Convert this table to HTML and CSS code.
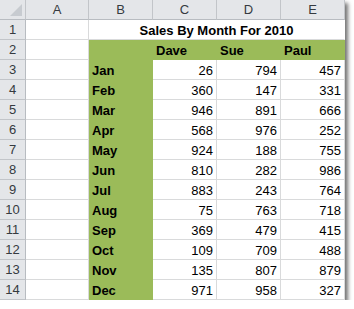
FILE: index.html
```html
<!DOCTYPE html>
<html lang="en">
<head>
    <meta charset="UTF-8">
    <meta name="viewport" content="width=device-width, initial-scale=1.0">
    <title>Sales By Month For 2010</title>
    <link rel="stylesheet" href="styles.css">
</head>
<body>
    <div class="sheet">
        <table class="grid">
            <colgroup>
                <col class="col-head">
                <col class="col-a">
                <col class="col-b">
                <col class="col-c">
                <col class="col-d">
                <col class="col-e">
            </colgroup>
            <thead>
                <tr>
                    <th class="corner">
                        <svg class="corner-mark" width="12" height="12" viewBox="0 0 12 12">
                            <polygon points="12,0 12,12 0,12" fill="#c7cbd0"/>
                        </svg>
                    </th>
                    <th>A</th>
                    <th>B</th>
                    <th>C</th>
                    <th>D</th>
                    <th>E</th>
                </tr>
            </thead>
            <tbody id="sheetBody">
                <tr>
                    <th class="row-num">1</th>
                    <td></td>
                    <td class="title" colspan="4">Sales By Month For 2010</td>
                </tr>
                <tr>
                    <th class="row-num">2</th>
                    <td></td>
                    <td class="fill"></td>
                    <td class="fill name">Dave</td>
                    <td class="fill name">Sue</td>
                    <td class="fill name">Paul</td>
                </tr>
                <!-- month rows are added here -->
            </tbody>
        </table>
    </div>

    <script>
        const sales = [
            ['Jan', 26, 794, 457],
            ['Feb', 360, 147, 331],
            ['Mar', 946, 891, 666],
            ['Apr', 568, 976, 252],
            ['May', 924, 188, 755],
            ['Jun', 810, 282, 986],
            ['Jul', 883, 243, 764],
            ['Aug', 75, 763, 718],
            ['Sep', 369, 479, 415],
            ['Oct', 109, 709, 488],
            ['Nov', 135, 807, 879],
            ['Dec', 971, 958, 327]
        ];

        const body = document.getElementById('sheetBody');
        sales.forEach((month, i) => {
            const row = document.createElement('tr');
            row.innerHTML = `
                <th class="row-num">${i + 3}</th>
                <td></td>
                <td class="fill month">${month[0]}</td>
                <td class="num">${month[1]}</td>
                <td class="num">${month[2]}</td>
                <td class="num">${month[3]}</td>
            `;
            body.appendChild(row);
        });
    </script>
</body>
</html>
```

FILE: styles.css
```css
body {
    margin: 0;
    background: #ffffff;
}

.sheet {
    width: 345px;
    box-shadow: 3px 3px 4px rgba(0, 0, 0, 0.55);
    background: #ffffff;
}

.grid {
    border-collapse: separate;
    border-spacing: 0;
    table-layout: fixed;
    width: 345px;
    font-family: "Liberation Sans", Arial, sans-serif;
    font-size: 13px;
    color: #000000;
}

.col-head { width: 26px; }
.col-a { width: 63px; }
.col-b { width: 64px; }
.col-c { width: 64px; }
.col-d { width: 64px; }
.col-e { width: 64px; }

th, td {
    height: 19px;
    padding: 0 3px 1px 3px;
    line-height: 15px;
    vertical-align: bottom;
    box-sizing: border-box;
    border-right: 1px solid #d9dadb;
    border-bottom: 1px solid #d9dadb;
    overflow: hidden;
    white-space: nowrap;
}

tr {
    height: 20px;
}

thead th {
    background: #e4e6e9;
    border-right-color: #c2c5c9;
    border-bottom-color: #b8bcc1;
    font-weight: normal;
    color: #353a40;
    text-align: center;
    vertical-align: middle;
    padding: 0;
}

.corner {
    position: relative;
}

.corner-mark {
    position: absolute;
    right: 3px;
    bottom: 3px;
}

.row-num {
    background: #e4e6e9;
    border-right-color: #b8bcc1;
    border-bottom-color: #c2c5c9;
    font-weight: normal;
    color: #353a40;
    text-align: center;
    padding: 0 0 2px 0;
}

.title {
    font-weight: bold;
    text-align: center;
    border-right-color: #ffffff;
}

.fill {
    background: #9bbb59;
    border-color: #9bbb59;
}

.name,
.month {
    font-weight: bold;
    text-align: left;
}

.num {
    text-align: right;
}
```
